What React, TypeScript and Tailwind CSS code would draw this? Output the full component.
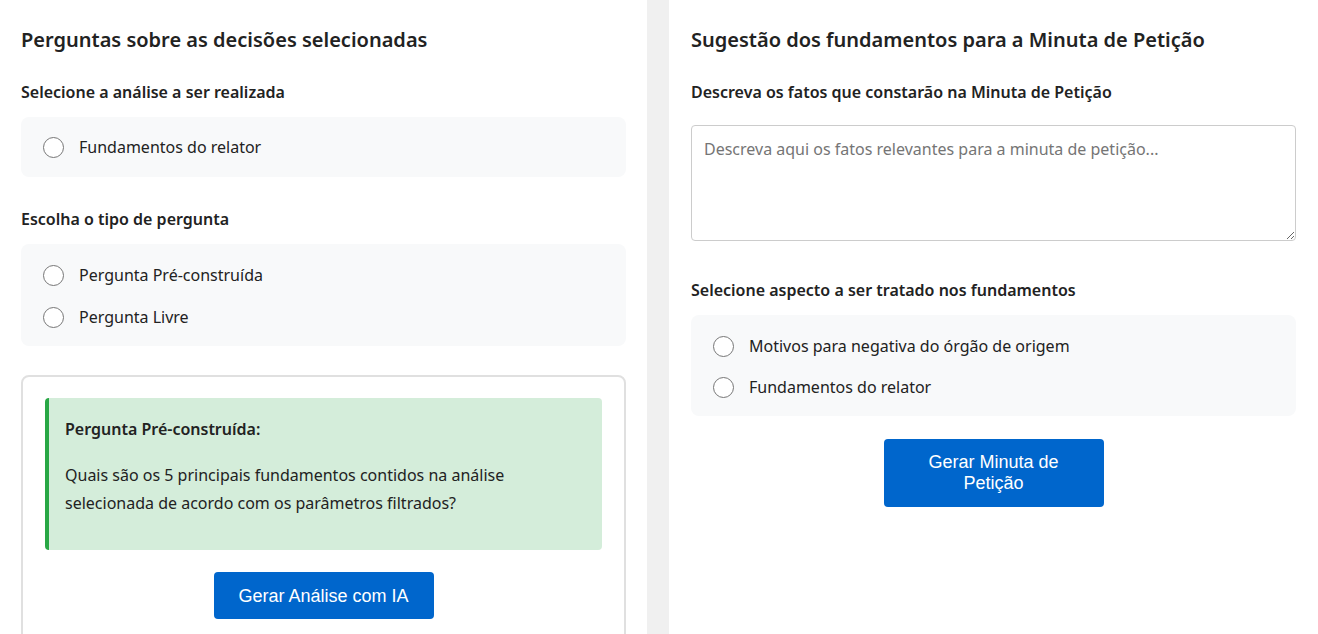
import React, { useState } from 'react';

const uiFont = { fontFamily: '"Segoe UI", "Noto Sans", "Open Sans", sans-serif' };

type RadioItem = { value: string; label: string };

function RadioGroup({
  name,
  items,
  value,
  onChange,
  className = '',
}: {
  name: string;
  items: RadioItem[];
  value: string;
  onChange: (v: string) => void;
  className?: string;
}) {
  return (
    <div className={`rounded-lg bg-[#f8f9fa] px-[22px] flex flex-col ${className}`}>
      {items.map((item) => (
        <label key={item.value} className="flex items-center gap-[15px] cursor-pointer h-6">
          <input
            type="radio"
            name={name}
            value={item.value}
            checked={value === item.value}
            onChange={() => onChange(item.value)}
            className="peer sr-only"
          />
          <span className="w-[21px] h-[21px] rounded-full border border-[#767676] bg-white shrink-0 flex items-center justify-center peer-checked:border-[#0066cc]">
            {value === item.value && <span className="w-[11px] h-[11px] rounded-full bg-[#0066cc]" />}
          </span>
          <span className="text-base text-[#222]">{item.label}</span>
        </label>
      ))}
    </div>
  );
}

function SectionLabel({ children, className = '' }: { children: React.ReactNode; className?: string }) {
  return <h3 className={`text-base font-semibold leading-6 text-[#222] ${className}`}>{children}</h3>;
}

export default function App() {
  const [analise, setAnalise] = useState('');
  const [tipo, setTipo] = useState('');
  const [aspecto, setAspecto] = useState('');
  const [fatos, setFatos] = useState('');

  return (
    <div className="h-[634px] overflow-hidden flex gap-[22px] bg-[#f0f0f0]" style={uiFont}>
      {/* coluna das perguntas */}
      <section className="flex-1 bg-white px-[21px] pt-[26px]">
        <h2 className="text-xl font-semibold leading-7 text-[#222]">Perguntas sobre as decisões selecionadas</h2>

        <SectionLabel className="mt-[26px]">Selecione a análise a ser realizada</SectionLabel>
        <RadioGroup
          className="mt-[13px] py-[18px]"
          name="analise"
          value={analise}
          onChange={setAnalise}
          items={[{ value: 'relator', label: 'Fundamentos do relator' }]}
        />

        <SectionLabel className="mt-[30px]">Escolha o tipo de pergunta</SectionLabel>
        <RadioGroup
          className="mt-[13px] pt-[19px] pb-[17px] gap-[18px]"
          name="tipo"
          value={tipo}
          onChange={setTipo}
          items={[
            { value: 'pre', label: 'Pergunta Pré-construída' },
            { value: 'livre', label: 'Pergunta Livre' },
          ]}
        />

        <div className="mt-[29px] rounded-lg border-2 border-[#e0e0e0] px-[22px] pt-[21px] pb-6">
          <div className="rounded border-l-4 border-[#28a745] bg-[#d4edda] pl-4 pr-4 pt-[19px] pb-[33px] text-[#222]">
            <p className="text-base font-semibold leading-6">Pergunta Pré-construída:</p>
            <p className="mt-5 text-base leading-7">
              Quais são os 5 principais fundamentos contidos na análise selecionada de acordo com os parâmetros
              filtrados?
            </p>
          </div>
          <div className="mt-[22px] flex justify-center">
            <button
              type="button"
              className="w-[220px] h-[47px] rounded bg-[#0066cc] text-white text-lg font-['Liberation_Sans',Arial,sans-serif] hover:bg-[#0052a3]"
            >
              Gerar Análise com IA
            </button>
          </div>
        </div>
      </section>

      {/* coluna da minuta */}
      <section className="flex-1 bg-white px-[22px] pt-[26px]">
        <h2 className="text-xl font-semibold leading-7 text-[#222]">Sugestão dos fundamentos para a Minuta de Petição</h2>

        <SectionLabel className="mt-[26px]">Descreva os fatos que constarão na Minuta de Petição</SectionLabel>
        <textarea
          value={fatos}
          onChange={(e) => setFatos(e.target.value)}
          placeholder="Descreva aqui os fatos relevantes para a minuta de petição..."
          className="mt-[21px] block w-full h-[116px] rounded border border-[#cccccc] px-3 py-[11px] text-base leading-6 text-[#222] placeholder:text-[#757575] outline-none focus:border-[#0066cc]"
        />

        <SectionLabel className="mt-[37px]">Selecione aspecto a ser tratado nos fundamentos</SectionLabel>
        <RadioGroup
          className="mt-[13px] pt-[19px] pb-[17px] gap-[17px]"
          name="aspecto"
          value={aspecto}
          onChange={setAspecto}
          items={[
            { value: 'motivos', label: 'Motivos para negativa do órgão de origem' },
            { value: 'relator', label: 'Fundamentos do relator' },
          ]}
        />

        <div className="mt-[23px] flex justify-center">
          <button
            type="button"
            className="w-[220px] h-[68px] rounded bg-[#0066cc] px-10 text-white text-lg leading-[21px] font-['Liberation_Sans',Arial,sans-serif] hover:bg-[#0052a3]"
          >
            Gerar Minuta de Petição
          </button>
        </div>
      </section>
    </div>
  );
}
